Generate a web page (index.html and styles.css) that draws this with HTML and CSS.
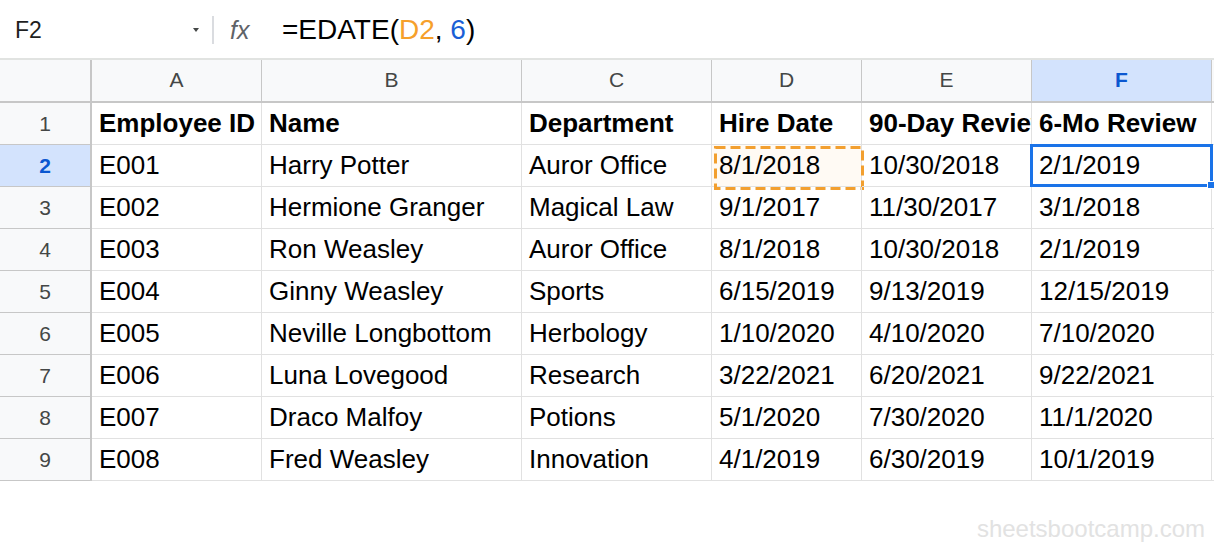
FILE: index.html
```html
<!DOCTYPE html>
<html>
<head>
<meta charset="utf-8">
<link rel="stylesheet" href="styles.css">
</head>
<body>
<div class="formula-bar">
  <div class="name-box"><span class="name-text">F2</span><span class="caret"></span></div>
  <div class="fb-sep"></div>
  <div class="fx">fx</div>
  <div class="formula">=EDATE(<span class="ref-orange">D2</span>, <span class="num-blue">6</span>)</div>
</div>
<div class="grid">
  <div class="ch corner"></div>
  <div class="ch">A</div>
  <div class="ch">B</div>
  <div class="ch">C</div>
  <div class="ch">D</div>
  <div class="ch">E</div>
  <div class="ch active">F</div>
  <div class="ch rest"></div>

  <div class="rh">1</div>
  <div class="c b">Employee ID</div>
  <div class="c b">Name</div>
  <div class="c b">Department</div>
  <div class="c b">Hire Date</div>
  <div class="c b">90-Day Review</div>
  <div class="c b">6-Mo Review</div>
  <div class="c rest"></div>

  <div class="rh active">2</div>
  <div class="c">E001</div>
  <div class="c">Harry Potter</div>
  <div class="c">Auror Office</div>
  <div class="c copied">8/1/2018<svg class="dash" width="150" height="44" viewBox="0 0 150 44"><rect x="1.5" y="1.5" width="147" height="41" fill="none" stroke="#f29f2f" stroke-width="3" stroke-dasharray="10 5"/></svg></div>
  <div class="c">10/30/2018</div>
  <div class="c selected">2/1/2019<span class="sel-box"><span class="handle"></span></span></div>
  <div class="c rest"></div>

  <div class="rh">3</div>
  <div class="c">E002</div>
  <div class="c">Hermione Granger</div>
  <div class="c">Magical Law</div>
  <div class="c">9/1/2017</div>
  <div class="c">11/30/2017</div>
  <div class="c">3/1/2018</div>
  <div class="c rest"></div>

  <div class="rh">4</div>
  <div class="c">E003</div>
  <div class="c">Ron Weasley</div>
  <div class="c">Auror Office</div>
  <div class="c">8/1/2018</div>
  <div class="c">10/30/2018</div>
  <div class="c">2/1/2019</div>
  <div class="c rest"></div>

  <div class="rh">5</div>
  <div class="c">E004</div>
  <div class="c">Ginny Weasley</div>
  <div class="c">Sports</div>
  <div class="c">6/15/2019</div>
  <div class="c">9/13/2019</div>
  <div class="c">12/15/2019</div>
  <div class="c rest"></div>

  <div class="rh">6</div>
  <div class="c">E005</div>
  <div class="c">Neville Longbottom</div>
  <div class="c">Herbology</div>
  <div class="c">1/10/2020</div>
  <div class="c">4/10/2020</div>
  <div class="c">7/10/2020</div>
  <div class="c rest"></div>

  <div class="rh">7</div>
  <div class="c">E006</div>
  <div class="c">Luna Lovegood</div>
  <div class="c">Research</div>
  <div class="c">3/22/2021</div>
  <div class="c">6/20/2021</div>
  <div class="c">9/22/2021</div>
  <div class="c rest"></div>

  <div class="rh">8</div>
  <div class="c">E007</div>
  <div class="c">Draco Malfoy</div>
  <div class="c">Potions</div>
  <div class="c">5/1/2020</div>
  <div class="c">7/30/2020</div>
  <div class="c">11/1/2020</div>
  <div class="c rest"></div>

  <div class="rh">9</div>
  <div class="c">E008</div>
  <div class="c">Fred Weasley</div>
  <div class="c">Innovation</div>
  <div class="c">4/1/2019</div>
  <div class="c">6/30/2019</div>
  <div class="c">10/1/2019</div>
  <div class="c rest"></div>
</div>
<div class="watermark">sheetsbootcamp.com</div>
</body>
</html>
```
FILE: styles.css
```css
html, body {
  margin: 0;
  padding: 0;
  overflow: hidden;
  background: #ffffff;
}
body {
  width: 1214px;
  height: 546px;
  font-family: "Liberation Sans", Arial, sans-serif;
  color: #000;
}

/* Formula bar */
.formula-bar {
  height: 58px;
  display: flex;
  align-items: center;
  padding-top: 2px;
  box-sizing: border-box;
}
.name-box {
  width: 212px;
  box-sizing: border-box;
  padding: 0 13px 0 15px;
  display: flex;
  align-items: center;
  justify-content: space-between;
}
.name-text {
  font-size: 23px;
  color: #1f1f1f;
}
.caret {
  width: 0;
  height: 0;
  border-left: 3px solid transparent;
  border-right: 3px solid transparent;
  border-top: 4px solid #444746;
}
.fb-sep {
  width: 2px;
  height: 28px;
  background: #dadce0;
}
.fx {
  margin-left: 16px;
  font-size: 25px;
  font-style: italic;
  color: #5f6368;
  width: 22px;
}
.formula {
  margin-left: 30px;
  font-size: 28px;
  color: #000;
}
.ref-orange { color: #f6a02b; }
.num-blue { color: #1a5fd6; }

/* Grid */
.grid {
  display: grid;
  grid-template-columns: 92px 170px 260px 190px 150px 170px 180px 1fr;
  grid-template-rows: 43px repeat(9, 42px);
  border-top: 2px solid #e1e3e1;
}
.ch {
  background: #f8f9fa;
  border-right: 1px solid #c7c7c7;
  border-bottom: 2px solid #c7c7c7;
  display: flex;
  align-items: center;
  justify-content: center;
  font-size: 21px;
  color: #444746;
  padding-bottom: 1px;
}
.ch.corner {
  border-right: 2px solid #c7c7c7;
}
.ch.active {
  background: #d3e3fd;
  color: #0b57d0;
  font-weight: bold;
}
.ch.rest {
  border-right: none;
}
.rh {
  background: #f8f9fa;
  border-right: 2px solid #c7c7c7;
  border-bottom: 1px solid #c7c7c7;
  display: flex;
  align-items: center;
  justify-content: center;
  font-size: 21px;
  color: #444746;
}
.rh.active {
  background: #d3e3fd;
  color: #0b57d0;
  font-weight: bold;
}
.c {
  position: relative;
  border-right: 1px solid #e1e1e1;
  border-bottom: 1px solid #e1e1e1;
  display: flex;
  align-items: center;
  padding-left: 7px;
  font-size: 26px;
  white-space: nowrap;
  overflow: hidden;
  min-width: 0;
}
.c.b {
  font-weight: bold;
}
.c.rest {
  border-right: none;
  padding-left: 0;
}
.c.copied {
  background: #fffaf4;
  overflow: visible;
}
.dash {
  position: absolute;
  left: 2px;
  top: 1px;
  pointer-events: none;
}
.c.selected {
  overflow: visible;
  z-index: 2;
}
.sel-box {
  position: absolute;
  left: -2px;
  right: -2px;
  top: -1px;
  bottom: -1px;
  border: 3px solid #1a73e8;
}
.handle {
  position: absolute;
  right: -5px;
  bottom: -5px;
  width: 6px;
  height: 6px;
  background: #1a73e8;
  border: 1px solid #ffffff;
}

.watermark {
  margin-top: 34px;
  text-align: right;
  padding-right: 9px;
  font-size: 24px;
  color: #e2e2e2;
}
```
